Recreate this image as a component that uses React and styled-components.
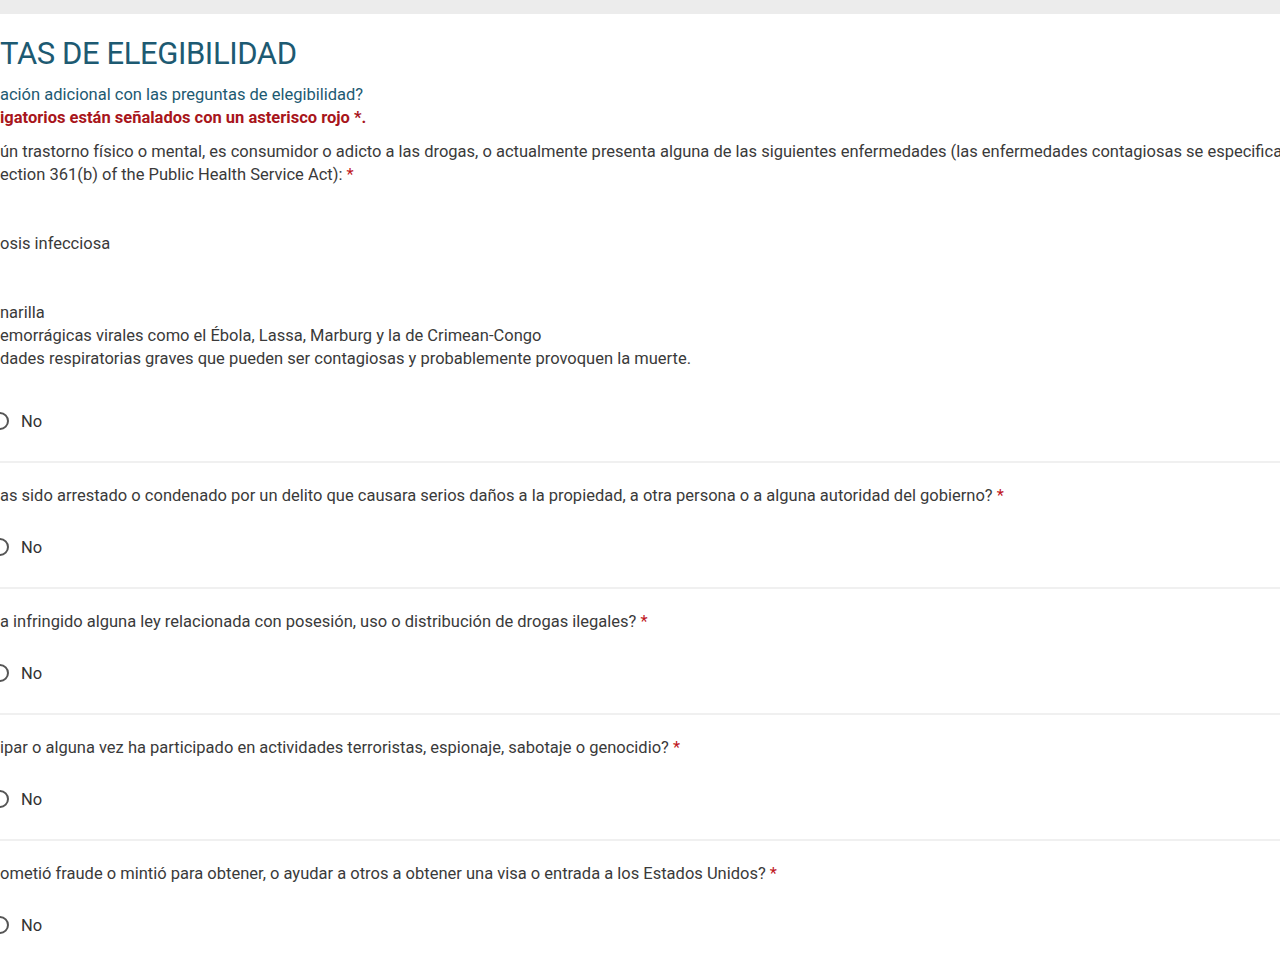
import React from "react";
import styled, { createGlobalStyle } from "styled-components";

const G = createGlobalStyle`
  html,body{margin:0;padding:0;background:#fff;overflow:hidden;}
  body{font-family:Roboto,"Liberation Sans",sans-serif;color:#3a3a3a;}
`;
const Top = styled.div`height:14px;background:#ececec;`;
const Page = styled.div`padding:0;white-space:nowrap;overflow:hidden;width:1280px;`;
const Title = styled.h1`margin:22px 0 0;font-weight:400;font-size:31px;line-height:36px;color:#1d5a72;letter-spacing:-0.4px;`;
const Sub = styled.div`font-size:16.5px;line-height:23px;color:${p=>p.red?"#a8151b":"#1d5a72"};font-weight:${p=>p.red?700:400};`;
const Q = styled.div`font-size:16.5px;line-height:23px;color:#3a3a3a;`;
const Star = styled.span`color:#c0161c;`;
const Block = styled.div`padding-top:${p=>p.pt||0}px;`;
const Radio = styled.div`display:flex;align-items:center;gap:12px;font-size:16.5px;height:24px;margin-left:-9px;color:#333;`;
const Circle = styled.span`width:14px;height:14px;border:2px solid #555;border-radius:50%;`;
const Divider = styled.div`height:2px;background:#f0f0f0;margin:28px 0 21px;`;
const Section = styled.div``;

const No = () => <Radio><Circle/>No</Radio>;

const qs = [
  "as sido arrestado o condenado por un delito que causara serios daños a la propiedad, a otra persona o a alguna autoridad del gobierno? ",
  "a infringido alguna ley relacionada con posesión, uso o distribución de drogas ilegales? ",
  "ipar o alguna vez ha participado en actividades terroristas, espionaje, sabotaje o genocidio? ",
  "ometió fraude o mintió para obtener, o ayudar a otros a obtener una visa o entrada a los Estados Unidos? ",
];

export default function App(){
  return <>
    <G/>
    <Top/>
    <Page>
      <Title>TAS DE ELEGIBILIDAD</Title>
      <Block pt={11}>
        <Sub>ación adicional con las preguntas de elegibilidad?</Sub>
        <Sub red>igatorios están señalados con un asterisco rojo *.</Sub>
      </Block>
      <Block pt={11}>
        <Q>ún trastorno físico o mental, es consumidor o adicto a las drogas, o actualmente presenta alguna de las siguientes enfermedades (las enfermedades contagiosas se especifican en la</Q>
        <Q>ection 361(b) of the Public Health Service Act): <Star>*</Star></Q>
      </Block>
      <Block pt={46}><Q>osis infecciosa</Q></Block>
      <Block pt={46}>
        <Q>narilla</Q>
        <Q>emorrágicas virales como el Ébola, Lassa, Marburg y la de Crimean-Congo</Q>
        <Q>dades respiratorias graves que pueden ser contagiosas y probablemente provoquen la muerte.</Q>
      </Block>
      <Block pt={39}><No/></Block>
      {qs.map((q,i)=>(
        <Section key={i}>
          <Divider/>
          <Q>{q}<Star>*</Star></Q>
          <Block pt={28}><No/></Block>
        </Section>
      ))}
    </Page>
  </>;
}
